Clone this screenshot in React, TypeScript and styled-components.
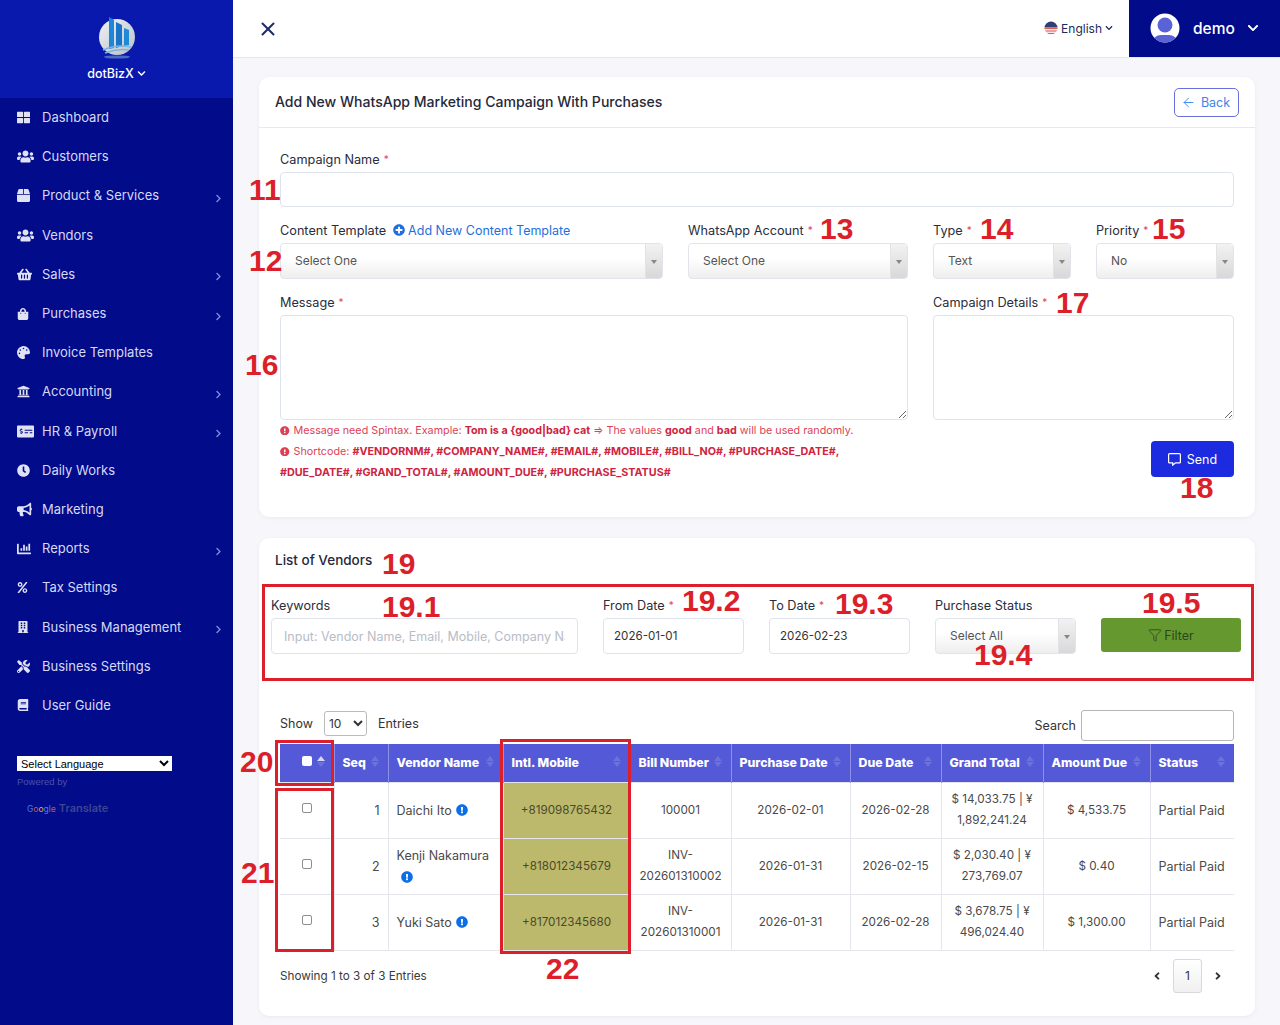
import React from "react";
import styled, { createGlobalStyle } from "styled-components";
import { ArrowLeft, Filter, X } from "lucide-react";
import {
  FaAngleLeft,
  FaAngleRight,
  FaBook,
  FaBuilding,
  FaBullhorn,
  FaChartBar,
  FaChevronDown,
  FaChevronRight,
  FaClock,
  FaBox,
  FaExclamationCircle,
  FaMoneyCheckAlt,
  FaPalette,
  FaPercent,
  FaPlusCircle,
  FaRegCommentAlt,
  FaShoppingBag,
  FaShoppingBasket,
  FaThLarge,
  FaTools,
  FaUniversity,
  FaUsers,
} from "react-icons/fa";

const FONT = `Inter, "Open Sans", "Liberation Sans", sans-serif`;

const GlobalStyle = createGlobalStyle`
  html, body {
    margin: 0;
    padding: 0;
    height: 100%;
    overflow: hidden;
    background: #f7f7fb;
    font-family: ${FONT};
  }
  * {
    box-sizing: border-box;
  }
`;

const Shell = styled.div`
  position: relative;
  display: flex;
  width: 1280px;
  height: 1025px;
  overflow: hidden;
`;

/* Sidebar */
const Sidebar = styled.aside`
  flex: 0 0 233px;
  background: #020b8a;
  display: flex;
  flex-direction: column;
`;

const Brand = styled.div`
  height: 98px;
  background: #0a19ad;
  display: flex;
  flex-direction: column;
  align-items: center;
  padding-top: 17px;
`;

const BrandName = styled.div`
  display: flex;
  align-items: center;
  gap: 3px;
  margin-top: 7px;
  color: #fff;
  font-size: 12.5px;
  font-weight: 500;
`;

const Menu = styled.nav`
  display: flex;
  flex-direction: column;
`;

const MenuRow = styled.div`
  height: 39.2px;
  display: flex;
  align-items: center;
  padding: 0 10px 0 17px;
  color: #d6d9f6;
  font-size: 13px;
`;

const MenuIcon = styled.span`
  flex: 0 0 25px;
  display: flex;
  align-items: center;
  color: #dfe1f5;
`;

const MenuLabel = styled.span`
  flex: 1;
  margin-bottom: 1px;
`;

const MenuArrow = styled.span`
  display: flex;
  margin-top: 5px;
  color: #7f88d8;
  font-size: 9px;
`;

const Translate = styled.div`
  margin: 31px 0 0 17px;
`;

const LanguageSelect = styled.select`
  display: block;
  width: 155px;
  height: 15px;
  padding: 0;
  border: 0;
  border-radius: 0;
  background: #fff;
  color: #000;
  font-family: "Liberation Sans", sans-serif;
  font-size: 11px;
`;

const Powered = styled.div`
  margin-top: 5px;
  color: #4a52a6;
  font-family: "Liberation Sans", sans-serif;
  font-size: 9.5px;
`;

const GoogleLine = styled.div`
  display: flex;
  align-items: baseline;
  gap: 3px;
  margin: 14px 0 0 10px;
  font-size: 8.5px;
`;

const GoogleLetter = styled.span<{ $color: string }>`
  color: ${(p) => p.$color};
`;

const TranslateWord = styled.span`
  color: #3d4593;
  font-size: 11px;
  font-weight: 600;
`;

/* Main column */
const Main = styled.main`
  flex: 1;
  min-width: 0;
  display: flex;
  flex-direction: column;
`;

const TopBar = styled.header`
  height: 58px;
  background: #fff;
  border-bottom: 1px solid #e6e7ee;
  display: flex;
  align-items: center;
  justify-content: space-between;
  padding-left: 24px;
`;

const CloseButton = styled.span`
  display: flex;
  margin-top: 1px;
  color: #1d2b6b;
`;

const TopRight = styled.div`
  display: flex;
  align-items: stretch;
  height: 57px;
`;

const LangPicker = styled.div`
  display: flex;
  align-items: center;
  gap: 3px;
  margin-right: 16px;
  padding-bottom: 1px;
  color: #1c2a5c;
  font-size: 12px;
`;

const UserBox = styled.div`
  width: 151px;
  background: #020b8a;
  color: #fff;
  display: flex;
  align-items: center;
  padding: 0 0 1px 21px;
  font-size: 15.5px;
  font-weight: 500;
`;

const UserName = styled.span`
  margin: 0 12px 0 13px;
`;

const Content = styled.div`
  padding: 19px 25px 0 26px;
  display: flex;
  flex-direction: column;
  gap: 21px;
`;

const Card = styled.section`
  background: #fff;
  border-radius: 10px;
  box-shadow: 0 1px 4px rgba(60, 60, 110, 0.08);
`;

const CardHead = styled.div`
  height: 51px;
  padding: 0 16px 1px;
  border-bottom: 1px solid #e8e8ee;
  display: flex;
  align-items: center;
  justify-content: space-between;
  color: #26293a;
  font-size: 14.05px;
  font-weight: 500;
`;

const BackButton = styled.button`
  width: 65px;
  height: 29px;
  margin-top: 1px;
  padding: 0 2px 0 0;
  background: #fff;
  border: 1px solid #6a6fdc;
  border-radius: 5px;
  color: #3b86e8;
  font-family: ${FONT};
  font-size: 12.5px;
  display: flex;
  align-items: center;
  justify-content: center;
  gap: 5px;
`;

const Form = styled.div`
  padding: 21px 21px 34px;
  display: flex;
  flex-direction: column;
  gap: 13px;
`;

const FormRow = styled.div<{ $cols: string }>`
  display: grid;
  grid-template-columns: ${(p) => p.$cols};
  column-gap: 25px;
`;

const Field = styled.div`
  display: flex;
  flex-direction: column;
  gap: 3px;
  min-width: 0;
`;

const Label = styled.label`
  display: flex;
  align-items: center;
  height: 20px;
  color: #2a2d3c;
  font-size: 12.7px;
  white-space: nowrap;
`;

const Required = styled.span`
  margin-left: 4px;
  color: #e2445c;
  font-size: 10px;
`;

const AddTemplate = styled.span`
  display: inline-flex;
  align-items: center;
  gap: 3px;
  margin-left: 7px;
  color: #1f6fe0;
  font-size: 12.5px;
`;

const TextInput = styled.input<{ $h?: number }>`
  width: 100%;
  height: ${(p) => p.$h ?? 35}px;
  padding: 0 12px;
  background: #fff;
  border: 1px solid #dfe3ee;
  border-radius: 4px;
  color: #333;
  font-family: ${FONT};
  font-size: 12.5px;
  outline: none;
  &::placeholder {
    color: #b9bcc6;
  }
`;

const DateInput = styled(TextInput)`
  padding-left: 10px;
  font-size: 11.6px;
`;

const TextArea = styled.textarea`
  display: block;
  width: 100%;
  height: 105px;
  border: 1px solid #dfe3ee;
  border-radius: 4px;
  background: #fff;
  outline: none;
`;

const Dropdown = styled.div`
  height: 36px;
  display: flex;
  border: 1px solid #e2e4ec;
  border-radius: 4px;
  background: linear-gradient(#fff 40%, #eeeeef);
  color: #555;
  font-size: 12px;
  overflow: hidden;
`;

const DropdownText = styled.span`
  flex: 1;
  display: flex;
  align-items: center;
  padding: 0 0 2px 14px;
  white-space: nowrap;
`;

const DropdownArrow = styled.span`
  position: relative;
  flex: 0 0 17px;
  border-left: 1px solid #e3e3e6;
  background: linear-gradient(#f2f2f2, #d8d8da);
  &::after {
    content: "";
    position: absolute;
    left: 5px;
    top: 16px;
    border: 3.5px solid transparent;
    border-top: 4px solid #888;
    border-bottom: 0;
  }
`;

const NoteGroup = styled.div`
  margin-top: -3px;
`;

const Note = styled.div`
  color: #dd3f55;
  font-size: 10.75px;
  line-height: 21px;
  white-space: nowrap;
`;

const NoteIcon = styled(FaExclamationCircle)`
  margin-right: 4px;
  font-size: 9.5px;
  vertical-align: -1px;
`;

const NoteStrong = styled.b`
  color: #cf2340;
  font-weight: 700;
`;

const SendRow = styled.div`
  display: flex;
  justify-content: flex-end;
  margin-top: 18px;
`;

const SendButton = styled.button`
  width: 83px;
  height: 36px;
  padding: 0;
  border: 0;
  border-radius: 4px;
  background: #1c2be0;
  color: #fff;
  font-family: ${FONT};
  font-size: 12.5px;
  display: flex;
  align-items: center;
  justify-content: center;
  gap: 6px;
`;

const ListTitle = styled.div`
  padding: 12px 16px 0;
  height: 57px;
  color: #26293a;
  font-size: 13.5px;
  font-weight: 500;
  line-height: 20px;
`;

const FilterRow = styled.div`
  display: grid;
  grid-template-columns: 307px 141px 141px 141px 140px;
  column-gap: 25px;
  padding: 0 14px 0 12px;
`;

const FilterButton = styled.button`
  align-self: start;
  height: 34px;
  margin-top: 23px;
  padding: 0;
  border: 0;
  border-radius: 3px;
  background: #65982f;
  color: #2f4423;
  font-family: ${FONT};
  font-size: 12.5px;
  display: flex;
  align-items: center;
  justify-content: center;
  gap: 2px;
`;

const TableArea = styled.div`
  padding: 56px 21px 0;
`;

const TableBar = styled.div`
  height: 34px;
  display: flex;
  justify-content: space-between;
  align-items: flex-start;
  color: #333;
  font-size: 12.5px;
`;

const BarGroup = styled.div<{ $gap: number; $top: number }>`
  display: flex;
  align-items: center;
  gap: ${(p) => p.$gap}px;
  margin-top: ${(p) => p.$top}px;
`;

const PageSize = styled.select`
  width: 43px;
  height: 25px;
  padding: 0;
  border: 1px solid #bbb;
  border-radius: 3px;
  background: #fff;
  color: #333;
  font-family: ${FONT};
  font-size: 12px;
`;

const SearchInput = styled.input`
  width: 153px;
  height: 31px;
  border: 1px solid #b5b5b5;
  border-radius: 3px;
  background: #fff;
  outline: none;
`;

const Table = styled.table`
  width: 954px;
  table-layout: fixed;
  border-collapse: collapse;
  font-size: 12.5px;
`;

const Col = styled.col<{ $w: number }>`
  width: ${(p) => p.$w}px;
`;

const Th = styled.th`
  position: relative;
  height: 38px;
  padding: 0 8px;
  background: #5459d8;
  border-left: 1px solid #8d90e6;
  color: #fff;
  font-size: 12.3px;
  font-weight: 800;
  text-align: left;
  white-space: nowrap;
  &:first-child {
    border-left: 0;
  }
`;

const Sort = styled.span`
  position: absolute;
  right: 9px;
  top: 12px;
  display: flex;
  flex-direction: column;
  gap: 1px;
`;

const SortUp = styled.i<{ $on?: boolean }>`
  border: 4px solid transparent;
  border-top: 0;
  border-bottom: 5px solid ${(p) => (p.$on ? "#d5d7f6" : "#6d71de")};
`;

const SortDown = styled.i`
  border: 4px solid transparent;
  border-bottom: 0;
  border-top: 5px solid #6d71de;
`;

const Td = styled.td<{ $align?: string; $mark?: boolean; $digits?: boolean }>`
  height: 56px;
  padding: 0 8px;
  border: 1px solid #e4e6ec;
  background: ${(p) => (p.$mark ? "#bdb96c" : "#fff")};
  color: ${(p) => (p.$mark ? "#4b4a2a" : "#4a4a4a")};
  font-size: ${(p) => (p.$digits ? "11.7px" : "12.5px")};
  line-height: 21px;
  text-align: ${(p) => p.$align ?? "center"};
  &:first-child {
    border-left: 0;
  }
  &:last-child {
    border-right: 0;
  }
`;

const HeadCheck = styled.span`
  display: block;
  width: 10px;
  height: 10px;
  margin: -3px 0 0 14px;
  border-radius: 2px;
  background: #fff;
`;

const RowCheck = styled.span`
  display: block;
  width: 10px;
  height: 10px;
  margin: -5px auto 0;
  border: 1px solid #8d8d8d;
  border-radius: 2px;
  background: #fff;
`;

const InfoIcon = styled(FaExclamationCircle)`
  margin-left: 4px;
  color: #0d6fe8;
  font-size: 12px;
  vertical-align: -1.5px;
`;

const TableFoot = styled.div`
  display: flex;
  justify-content: space-between;
  align-items: center;
  margin-top: 8px;
  padding-bottom: 23px;
  color: #3a3a3a;
  font-size: 11.7px;
`;

const Pager = styled.div`
  display: flex;
  align-items: center;
  gap: 10px;
  margin-right: 10px;
  color: #333;
  font-size: 12px;
`;

const PageNumber = styled.span`
  width: 29px;
  height: 34px;
  display: flex;
  align-items: center;
  justify-content: center;
  border: 1px solid #d8d8d8;
  border-radius: 3px;
  background: linear-gradient(#fff, #f0f0f0);
`;

/* Red markers drawn over the screenshot */
const Callout = styled.span<{ $x: number; $y: number }>`
  position: absolute;
  left: ${(p) => p.$x}px;
  top: ${(p) => p.$y}px;
  transform: translateY(-50%);
  color: #dc1f2a;
  font-family: "Liberation Sans", sans-serif;
  font-size: 30px;
  font-weight: 700;
  line-height: 1;
  pointer-events: none;
`;

const Frame = styled.span<{ $x: number; $y: number; $w: number; $h: number }>`
  position: absolute;
  left: ${(p) => p.$x}px;
  top: ${(p) => p.$y}px;
  width: ${(p) => p.$w}px;
  height: ${(p) => p.$h}px;
  border: 3px solid #dc1f2a;
  pointer-events: none;
`;

const Logo = () => (
  <svg width="40" height="42" viewBox="0 0 40 42">
    <defs>
      <linearGradient id="disc" x1="0" y1="0" x2="1" y2="1">
        <stop offset="0" stopColor="#f0f2f4" />
        <stop offset="1" stopColor="#b9c0c8" />
      </linearGradient>
    </defs>
    <circle cx="20" cy="20" r="18" fill="url(#disc)" />
    <path d="M12 0l5 3v28l-5 1z" fill="#1d86d8" />
    <path d="M19 5l6 3v21l-6 2z" fill="#1a74c8" />
    <path d="M27 11l5 2v15l-5 1z" fill="#1f8ad8" />
    <path d="M6 33q14-6 28-3M8 36q12-5 24-3" stroke="#7fb2dc" strokeWidth="1.4" fill="none" />
    <ellipse cx="20" cy="40" rx="13" ry="1.6" fill="#4b68c4" />
  </svg>
);

const FlagIcon = () => (
  <svg width="14" height="14" viewBox="0 0 14 14">
    <clipPath id="flagClip">
      <circle cx="7" cy="7" r="6.5" />
    </clipPath>
    <g clipPath="url(#flagClip)">
      <rect width="14" height="14" fill="#f2e6e4" />
      <path d="M0 7.5h14M0 10h14M0 12.5h14" stroke="#d9635c" strokeWidth="1.2" />
      <rect width="14" height="6.5" fill="#2f3f75" />
    </g>
  </svg>
);

const Avatar = () => (
  <svg width="30" height="30" viewBox="0 0 30 30">
    <clipPath id="avatarClip">
      <circle cx="15" cy="15" r="14.5" />
    </clipPath>
    <circle cx="15" cy="15" r="14.5" fill="#fff" />
    <g clipPath="url(#avatarClip)" fill="#5a62d8">
      <circle cx="15" cy="12" r="7.5" />
      <path d="M2 30c0-5 5-8 9-8h8c4 0 9 3 9 8z" />
    </g>
  </svg>
);

const menuItems = [
  { label: "Dashboard", icon: <FaThLarge size={13} /> },
  { label: "Customers", icon: <FaUsers size={17} /> },
  { label: "Product & Services", icon: <FaBox size={13} />, sub: true },
  { label: "Vendors", icon: <FaUsers size={17} /> },
  { label: "Sales", icon: <FaShoppingBasket size={15} />, sub: true },
  { label: "Purchases", icon: <FaShoppingBag size={12} />, sub: true },
  { label: "Invoice Templates", icon: <FaPalette size={13} /> },
  { label: "Accounting", icon: <FaUniversity size={13} />, sub: true },
  { label: "HR & Payroll", icon: <FaMoneyCheckAlt size={17} />, sub: true },
  { label: "Daily Works", icon: <FaClock size={13} /> },
  { label: "Marketing", icon: <FaBullhorn size={15} /> },
  { label: "Reports", icon: <FaChartBar size={14} />, sub: true },
  { label: "Tax Settings", icon: <FaPercent size={11} /> },
  { label: "Business Management", icon: <FaBuilding size={12} />, sub: true },
  { label: "Business Settings", icon: <FaTools size={13} /> },
  { label: "User Guide", icon: <FaBook size={12} /> },
];

const columns = [
  { title: "", width: 54 },
  { title: "Seq", width: 54 },
  { title: "Vendor Name", width: 115 },
  { title: "Intl. Mobile", width: 127 },
  { title: "Bill Number", width: 101 },
  { title: "Purchase Date", width: 119 },
  { title: "Due Date", width: 91 },
  { title: "Grand Total", width: 102 },
  { title: "Amount Due", width: 107 },
  { title: "Status", width: 84 },
];

const vendors = [
  {
    seq: 1,
    name: "Daichi Ito",
    mobile: "+819098765432",
    bill: "100001",
    purchased: "2026-02-01",
    due: "2026-02-28",
    total: "$ 14,033.75 | ¥ 1,892,241.24",
    owed: "$ 4,533.75",
  },
  {
    seq: 2,
    name: "Kenji Nakamura",
    mobile: "+818012345679",
    bill: "INV-202601310002",
    purchased: "2026-01-31",
    due: "2026-02-15",
    total: "$ 2,030.40 | ¥ 273,769.07",
    owed: "$ 0.40",
  },
  {
    seq: 3,
    name: "Yuki Sato",
    mobile: "+817012345680",
    bill: "INV-202601310001",
    purchased: "2026-01-31",
    due: "2026-02-28",
    total: "$ 3,678.75 | ¥ 496,024.40",
    owed: "$ 1,300.00",
  },
];

const callouts = [
  { text: "11", x: 249, y: 190 },
  { text: "12", x: 249, y: 261 },
  { text: "13", x: 820, y: 229 },
  { text: "14", x: 980, y: 229 },
  { text: "15", x: 1152, y: 229 },
  { text: "16", x: 245, y: 365 },
  { text: "17", x: 1056, y: 303 },
  { text: "18", x: 1180, y: 488 },
  { text: "19", x: 382, y: 564 },
  { text: "19.1", x: 382, y: 607 },
  { text: "19.2", x: 682, y: 601 },
  { text: "19.3", x: 835, y: 604 },
  { text: "19.4", x: 974, y: 655 },
  { text: "19.5", x: 1142, y: 603 },
  { text: "20", x: 240, y: 762 },
  { text: "21", x: 241, y: 873 },
  { text: "22", x: 546, y: 969 },
];

const frames = [
  { x: 262, y: 584, w: 992, h: 97 },
  { x: 275, y: 740, w: 59, h: 46 },
  { x: 275, y: 788, w: 59, h: 164 },
  { x: 500, y: 739, w: 131, h: 215 },
];

const googleLetters = [
  ["G", "#4a7fe0"],
  ["o", "#d8503f"],
  ["o", "#e0b030"],
  ["g", "#4a7fe0"],
  ["l", "#3fa45a"],
  ["e", "#d8503f"],
];

const App: React.FC = () => {
  return (
    <Shell>
      <GlobalStyle />
      <Sidebar>
        <Brand>
          <Logo />
          <BrandName>
            dotBizX <FaChevronDown size={9} />
          </BrandName>
        </Brand>
        <Menu>
          {menuItems.map((item) => (
            <MenuRow key={item.label}>
              <MenuIcon>{item.icon}</MenuIcon>
              <MenuLabel>{item.label}</MenuLabel>
              {item.sub && (
                <MenuArrow>
                  <FaChevronRight />
                </MenuArrow>
              )}
            </MenuRow>
          ))}
        </Menu>
        <Translate>
          <LanguageSelect defaultValue="">
            <option value="">Select Language</option>
          </LanguageSelect>
          <Powered>Powered by</Powered>
          <GoogleLine>
            <span>
              {googleLetters.map(([letter, color], i) => (
                <GoogleLetter key={i} $color={color}>
                  {letter}
                </GoogleLetter>
              ))}
            </span>
            <TranslateWord>Translate</TranslateWord>
          </GoogleLine>
        </Translate>
      </Sidebar>

      <Main>
        <TopBar>
          <CloseButton>
            <X size={22} strokeWidth={2.2} />
          </CloseButton>
          <TopRight>
            <LangPicker>
              <FlagIcon />
              English <FaChevronDown size={8} />
            </LangPicker>
            <UserBox>
              <Avatar />
              <UserName>demo</UserName>
              <FaChevronDown size={12} />
            </UserBox>
          </TopRight>
        </TopBar>

        <Content>
          <Card>
            <CardHead>
              Add New WhatsApp Marketing Campaign With Purchases
              <BackButton>
                <ArrowLeft size={15} strokeWidth={1.5} />
                Back
              </BackButton>
            </CardHead>
            <Form>
              <Field>
                <Label>
                  Campaign Name <Required>*</Required>
                </Label>
                <TextInput />
              </Field>
              <FormRow $cols="383px 220px 138px 138px">
                <Field>
                  <Label>
                    Content Template
                    <AddTemplate>
                      <FaPlusCircle size={12} /> Add New Content Template
                    </AddTemplate>
                  </Label>
                  <Dropdown>
                    <DropdownText>Select One</DropdownText>
                    <DropdownArrow />
                  </Dropdown>
                </Field>
                <Field>
                  <Label>
                    WhatsApp Account <Required>*</Required>
                  </Label>
                  <Dropdown>
                    <DropdownText>Select One</DropdownText>
                    <DropdownArrow />
                  </Dropdown>
                </Field>
                <Field>
                  <Label>
                    Type <Required>*</Required>
                  </Label>
                  <Dropdown>
                    <DropdownText>Text</DropdownText>
                    <DropdownArrow />
                  </Dropdown>
                </Field>
                <Field>
                  <Label>
                    Priority <Required>*</Required>
                  </Label>
                  <Dropdown>
                    <DropdownText>No</DropdownText>
                    <DropdownArrow />
                  </Dropdown>
                </Field>
              </FormRow>
              <FormRow $cols="628px 301px">
                <Field>
                  <Label>
                    Message <Required>*</Required>
                  </Label>
                  <TextArea />
                  <NoteGroup>
                    <Note>
                      <NoteIcon />
                      Message need Spintax. Example: <NoteStrong>Tom is a {"{good|bad}"} cat</NoteStrong> =&gt; The
                      values <NoteStrong>good</NoteStrong> and <NoteStrong>bad</NoteStrong> will be used randomly.
                    </Note>
                    <Note>
                      <NoteIcon />
                      Shortcode:{" "}
                      <NoteStrong>
                        #VENDORNM#, #COMPANY_NAME#, #EMAIL#, #MOBILE#, #BILL_NO#, #PURCHASE_DATE#,
                      </NoteStrong>
                      <br />
                      <NoteStrong>#DUE_DATE#, #GRAND_TOTAL#, #AMOUNT_DUE#, #PURCHASE_STATUS#</NoteStrong>
                    </Note>
                  </NoteGroup>
                </Field>
                <Field>
                  <Label>
                    Campaign Details <Required>*</Required>
                  </Label>
                  <TextArea />
                  <SendRow>
                    <SendButton>
                      <FaRegCommentAlt size={13} />
                      Send
                    </SendButton>
                  </SendRow>
                </Field>
              </FormRow>
            </Form>
          </Card>

          <Card>
            <ListTitle>List of Vendors</ListTitle>
            <FilterRow>
              <Field>
                <Label>Keywords</Label>
                <TextInput $h={36} placeholder="Input: Vendor Name, Email, Mobile, Company Na" />
              </Field>
              <Field>
                <Label>
                  From Date <Required>*</Required>
                </Label>
                <DateInput $h={36} defaultValue="2026-01-01" />
              </Field>
              <Field>
                <Label>
                  To Date <Required>*</Required>
                </Label>
                <DateInput $h={36} defaultValue="2026-02-23" />
              </Field>
              <Field>
                <Label>Purchase Status</Label>
                <Dropdown>
                  <DropdownText>Select All</DropdownText>
                  <DropdownArrow />
                </Dropdown>
              </Field>
              <FilterButton>
                <Filter size={14} strokeWidth={1.4} />
                Filter
              </FilterButton>
            </FilterRow>

            <TableArea>
              <TableBar>
                <BarGroup $gap={11} $top={1}>
                  Show
                  <PageSize defaultValue="10">
                    <option value="10">10</option>
                  </PageSize>
                  Entries
                </BarGroup>
                <BarGroup $gap={5} $top={0}>
                  Search
                  <SearchInput />
                </BarGroup>
              </TableBar>
              <Table>
                <colgroup>
                  {columns.map((col, i) => (
                    <Col key={i} $w={col.width} />
                  ))}
                </colgroup>
                <thead>
                  <tr>
                    {columns.map((col, i) => (
                      <Th key={i}>
                        {i === 0 ? <HeadCheck /> : col.title}
                        <Sort>
                          <SortUp $on={i === 0} />
                          <SortDown />
                        </Sort>
                      </Th>
                    ))}
                  </tr>
                </thead>
                <tbody>
                  {vendors.map((v) => (
                    <tr key={v.seq}>
                      <Td>
                        <RowCheck />
                      </Td>
                      <Td $align="right">{v.seq}</Td>
                      <Td $align="left">
                        {v.name}
                        <InfoIcon />
                      </Td>
                      <Td $mark $digits>
                        {v.mobile}
                      </Td>
                      <Td $digits>{v.bill}</Td>
                      <Td $digits>{v.purchased}</Td>
                      <Td $digits>{v.due}</Td>
                      <Td $digits>{v.total}</Td>
                      <Td $digits>{v.owed}</Td>
                      <Td $align="left">Partial Paid</Td>
                    </tr>
                  ))}
                </tbody>
              </Table>
              <TableFoot>
                Showing 1 to 3 of 3 Entries
                <Pager>
                  <FaAngleLeft />
                  <PageNumber>1</PageNumber>
                  <FaAngleRight />
                </Pager>
              </TableFoot>
            </TableArea>
          </Card>
        </Content>
      </Main>

      {frames.map((f) => (
        <Frame key={`${f.x}-${f.y}`} $x={f.x} $y={f.y} $w={f.w} $h={f.h} />
      ))}
      {callouts.map((c) => (
        <Callout key={c.text} $x={c.x} $y={c.y}>
          {c.text}
        </Callout>
      ))}
    </Shell>
  );
};

export default App;
